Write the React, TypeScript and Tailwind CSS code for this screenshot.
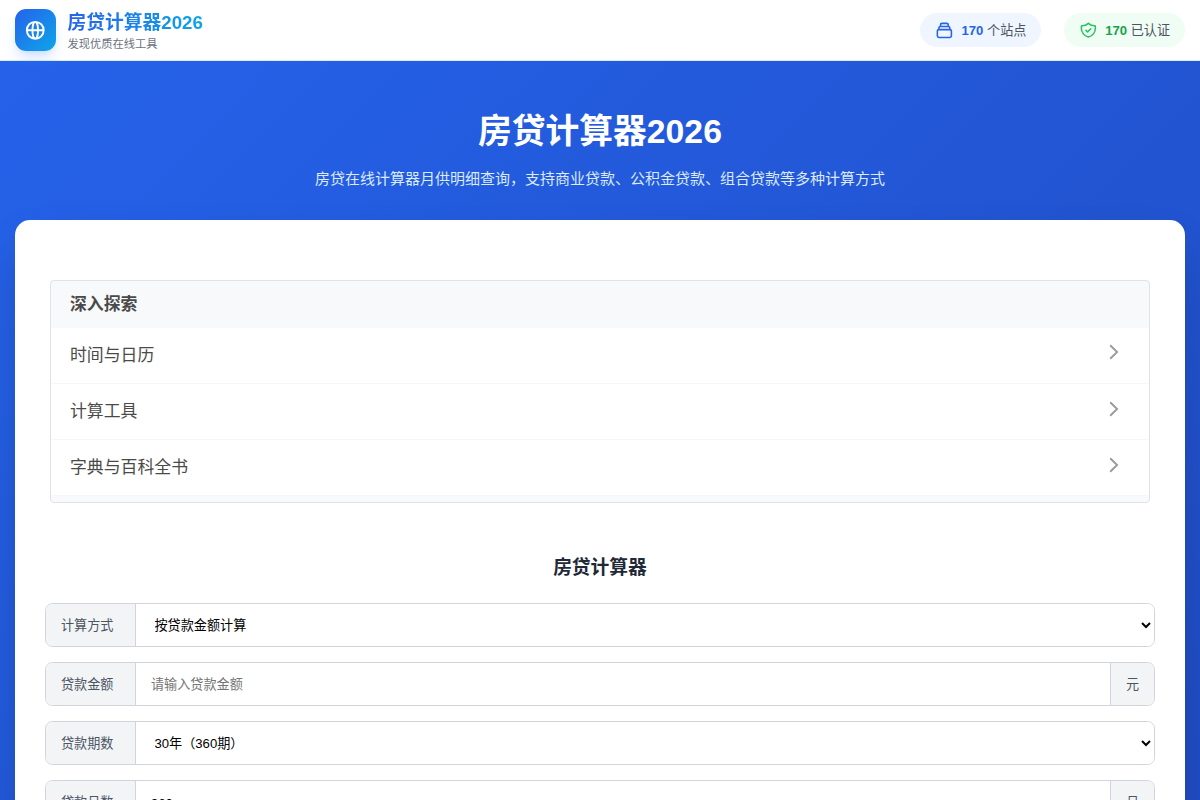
import React from 'react';

const topics = ['时间与日历', '计算工具', '字典与百科全书'];

function GlobeIcon() {
  return (
    <svg className="size-[22.5px]" viewBox="0 0 24 24" fill="none" stroke="currentColor" strokeWidth="2" strokeLinecap="round" strokeLinejoin="round">
      <path d="M21 12a9 9 0 01-9 9m9-9a9 9 0 00-9-9m9 9H3m9 9a9 9 0 01-9-9m9 9c1.657 0 3-4.03 3-9s-1.343-9-3-9m0 18c-1.657 0-3-4.03-3-9s1.343-9 3-9m-9 9a9 9 0 019-9" />
    </svg>
  );
}

function StackIcon() {
  return (
    <svg className="size-[18.75px] text-[#2563eb]" viewBox="0 0 24 24" fill="none" stroke="currentColor" strokeWidth="2" strokeLinecap="round" strokeLinejoin="round">
      <path d="M19 11H5m14 0a2 2 0 012 2v6a2 2 0 01-2 2H5a2 2 0 01-2-2v-6a2 2 0 012-2m14 0V9a2 2 0 00-2-2M5 11V9a2 2 0 012-2m0 0V5a2 2 0 012-2h6a2 2 0 012 2v2M7 7h10" />
    </svg>
  );
}

function ShieldIcon() {
  return (
    <svg className="size-[18.75px] text-[#22c55e]" viewBox="0 0 24 24" fill="none" stroke="currentColor" strokeWidth="2" strokeLinecap="round" strokeLinejoin="round">
      <path d="M9 12l2 2 4-4m5.618-4.016A11.955 11.955 0 0112 2.944a11.955 11.955 0 01-8.618 3.04A12.02 12.02 0 003 9c0 5.591 3.824 10.29 9 11.622 5.176-1.332 9-6.03 9-11.622 0-1.042-.133-2.052-.382-3.016z" />
    </svg>
  );
}

function Field({ label, unit, children }: { label: string; unit?: string; children: React.ReactNode }) {
  return (
    <div className="flex h-[44.1px] shrink-0 overflow-hidden rounded-[7.5px] border border-[#d1d5db] bg-white">
      <div className="flex w-[90px] shrink-0 items-center border-r border-[#d1d5db] bg-[#f3f4f6] pt-[1px] pl-[15px] text-[13.125px] text-[#4b5563]">
        {label}
      </div>
      {children}
      {unit && (
        <div className="flex w-[44px] shrink-0 items-center justify-center border-l border-[#d1d5db] bg-[#f3f4f6] pt-[1px] text-[13.125px] text-[#4b5563]">
          {unit}
        </div>
      )}
    </div>
  );
}

export default function App() {
  return (
    <div className="flex h-[800px] flex-col overflow-hidden bg-[linear-gradient(135deg,#2563eb_0px,#1e40af_2192px)] font-['Liberation_Sans','Noto_Sans_CJK_SC',sans-serif]">
      <header className="flex h-[61px] shrink-0 items-center justify-between border-b border-[#dbeafe] bg-white px-[15px]">
        <div className="flex items-center gap-[11.25px]">
          <div className="flex size-[41.25px] items-center justify-center rounded-[11.25px] bg-[linear-gradient(135deg,#2563eb,#0ea5e9)] text-white shadow-lg shadow-blue-500/20">
            <GlobeIcon />
          </div>
          <div className="flex flex-col pt-[2px]">
            <div className="bg-[linear-gradient(90deg,#2563eb,#0ea5e9)] bg-clip-text text-[18.75px] leading-[26.25px] font-bold text-transparent">
              房贷计算器2026
            </div>
            <div className="text-[11.25px] leading-[15px] text-[#6b7280]">发现优质在线工具</div>
          </div>
        </div>
        <div className="flex items-center gap-[22.5px] text-[13.125px] text-[#4b5563]">
          <div className="flex h-[34px] items-center gap-[7.5px] rounded-full bg-[#eff6ff] px-[15px]">
            <StackIcon />
            <span className="pt-[1px]"><b className="text-[#2563eb]">170</b> 个站点</span>
          </div>
          <div className="flex h-[34px] items-center gap-[7.5px] rounded-full bg-[#f0fdf4] px-[15px]">
            <ShieldIcon />
            <span className="pt-[1px]"><b className="text-[#16a34a]">170</b> 已认证</span>
          </div>
        </div>
      </header>

      <section className="flex h-[159.3px] shrink-0 flex-col items-center pt-[49.5px] text-center">
        <h1 className="text-[33.75px] leading-[40px] font-bold text-white">房贷计算器2026</h1>
        <p className="mt-[16px] text-[15px] leading-[24px] text-[#dbeafe]">
          房贷在线计算器月供明细查询，支持商业贷款、公积金贷款、组合贷款等多种计算方式
        </p>
      </section>

      <main className="mx-[15px] flex h-[900px] shrink-0 flex-col rounded-t-[15px] bg-white px-[30px] pt-[60px] shadow-[0_23px_47px_-11px_rgba(0,0,0,0.25)]">
        <div className="mx-[5px] flex h-[222.4px] shrink-0 flex-col overflow-hidden rounded-[4px] border border-[#e0e2e5] bg-[#f8f9fb]">
          <div className="flex h-[46.6px] shrink-0 items-center pt-[1px] pl-[19px] text-[16.875px] font-bold text-[#4a4a4a]">深入探索</div>
          {topics.map((topic) => (
            <div key={topic} className="flex h-[56.1px] shrink-0 items-center justify-between border-b border-[#f5f6f8] bg-white pr-[30px] pl-[19px] text-[16.875px] text-[#4a4a4a]">
              <span className="pt-[1px]">{topic}</span>
              <svg className="mb-[6px] h-[16px] w-[10px]" viewBox="0 0 10 16" fill="none" stroke="#9b9b9b" strokeWidth="1.9">
                <path d="M1.2 1.2L8.1 8L1.2 14.8" />
              </svg>
            </div>
          ))}
        </div>

        <h2 className="mt-[51.1px] mb-[22.3px] shrink-0 text-center text-[18.75px] leading-[27px] font-bold text-[#1f2937]">房贷计算器</h2>

        <div className="flex flex-col gap-[15px]">
          <Field label="计算方式">
            <select className="min-w-0 flex-1 bg-white px-[14.5px] pt-[1px] text-[13.125px] text-black outline-none">
              <option>按贷款金额计算</option>
            </select>
          </Field>
          <Field label="贷款金额" unit="元">
            <input className="min-w-0 flex-1 bg-white px-[15px] pt-[2px] text-[13.125px] text-black outline-none placeholder:text-[#757575]" placeholder="请输入贷款金额" />
          </Field>
          <Field label="贷款期数">
            <select className="min-w-0 flex-1 bg-white px-[14.5px] pt-[1px] text-[13.125px] text-black outline-none">
              <option>30年（360期）</option>
            </select>
          </Field>
          <Field label="贷款月数" unit="月">
            <input className="min-w-0 flex-1 bg-white px-[15px] pt-[2px] text-[13.125px] text-black outline-none" defaultValue="360" />
          </Field>
        </div>
      </main>
    </div>
  );
}
